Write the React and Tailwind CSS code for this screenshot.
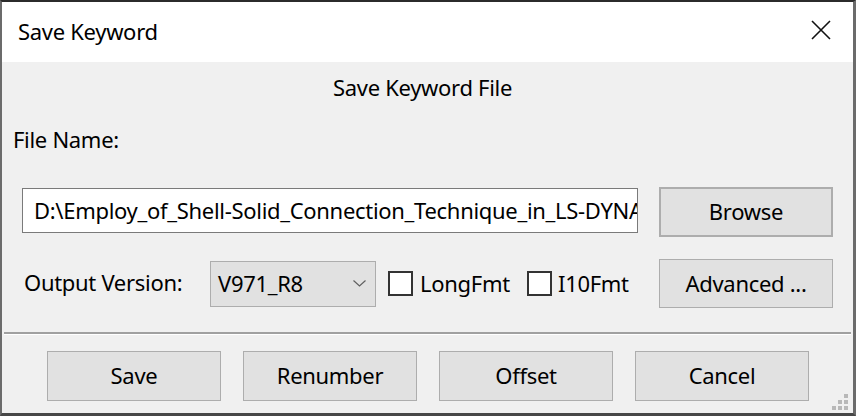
import React from "react";

function Btn({ children, className = "" }) {
  return (
    <div
      className={
        "flex items-center justify-center pb-[2px] bg-[#e1e1e1] border border-[#adadad] " +
        className
      }
    >
      {children}
    </div>
  );
}

function Check() {
  return <div className="w-[25px] h-[25px] bg-white border-2 border-[#333333] shrink-0" />;
}

export default function App() {
  return (
    <div className="relative w-[856px] h-[416px] bg-[#f0f0f0] border-t-2 border-l-2 border-r-[3px] border-b-[3px] border-l-[#6b6b6b] border-r-[#6b6b6b] border-t-[#2b2b2b] border-b-[#474747] flex flex-col font-['Noto_Sans',sans-serif] text-[22px] tracking-[-0.3px] leading-[32px] text-black overflow-hidden">
      {/* title bar */}
      <div className="h-[60px] bg-white flex items-center justify-between pl-[16px] pr-[22px] shrink-0">
        <span className="mb-[2px]">Save Keyword</span>
        <svg width="20" height="20" viewBox="0 0 20 20" className="mb-1">
          <path d="M1 1 L19 19 M19 1 L1 19" stroke="#111" strokeWidth="1.6" fill="none" />
        </svg>
      </div>

      <div className="mt-[9px] h-[32px] text-center pr-[10px]">Save Keyword File</div>

      <div className="mt-[20px] h-[32px] pl-[11px]">File Name:</div>

      <div className="mt-[32px] flex items-start pl-[20px]">
        <div className="mt-[1px] w-[616px] h-[45px] bg-white border border-[#7a7a7a] flex items-center pb-[2px] pl-[11px] overflow-hidden whitespace-nowrap">
          {"D:\\Employ_of_Shell-Solid_Connection_Technique_in_LS-DYNA.k"}
        </div>
        <Btn className="ml-[21px] w-[174px] h-[50px] border-2 border-[#0078d7]">Browse</Btn>
      </div>

      <div className="mt-[22px] h-[49px] flex items-center pl-[22px]">
        <div className="w-[186px] shrink-0 mb-[3px]">Output Version:</div>
        <div className="w-[166px] h-[46px] bg-[#e1e1e1] border border-[#adadad] flex items-center justify-between pl-[7px] pr-[9px] shrink-0">
          <span className="mb-[2px]">V971_R8</span>
          <svg width="13" height="7" viewBox="0 0 13 7">
            <path d="M0.5 0.5 L6.5 6 L12.5 0.5" stroke="#606060" strokeWidth="1.2" fill="none" />
          </svg>
        </div>
        <div className="ml-[12px]">
          <Check />
        </div>
        <div className="ml-[7px] w-[107px] shrink-0 mb-[2px]">LongFmt</div>
        <Check />
        <div className="ml-[6px] w-[101px] shrink-0 mb-[2px]">I10Fmt</div>
        <Btn className="w-[174px] h-[49px]">Advanced ...</Btn>
      </div>

      <div className="mt-[24px] mx-[2px]">
        <div className="h-[2px] bg-[#a0a0a0]" />
        <div className="h-[1px] bg-white" />
      </div>

      <div className="mt-[16px] flex pl-[45px] gap-[22px]">
        <Btn className="w-[174px] h-[50px]">Save</Btn>
        <Btn className="w-[174px] h-[50px]">Renumber</Btn>
        <Btn className="w-[174px] h-[50px]">Offset</Btn>
        <Btn className="w-[174px] h-[50px]">Cancel</Btn>
      </div>

      <svg width="16" height="16" viewBox="0 0 16 16" className="absolute right-[5px] bottom-[3px]">
        <g fill="#b8b8b8">
          <rect x="12" y="0" width="4" height="4" />
          <rect x="6" y="6" width="4" height="4" />
          <rect x="12" y="6" width="4" height="4" />
          <rect x="0" y="12" width="4" height="4" />
          <rect x="6" y="12" width="4" height="4" />
          <rect x="12" y="12" width="4" height="4" />
        </g>
      </svg>
    </div>
  );
}
